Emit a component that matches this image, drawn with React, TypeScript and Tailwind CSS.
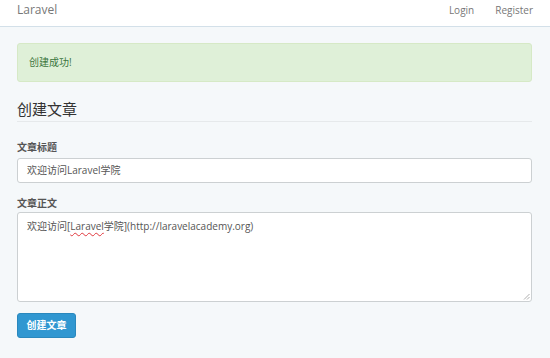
import React from "react";

export default function App() {
  const font = "font-['Open_Sans','Noto_Sans_CJK_SC',sans-serif]";
  return (
    <div className={`min-h-[358px] w-[550px] bg-[#f5f8fa] ${font} text-[#636b6f]`}>
      <nav className="h-[27px] border-b border-[#d3e0e9] bg-white">
        <div className="flex h-[20px] items-center pl-[17px] pr-[17px]">
          <span className="text-[12px] text-[#777]">Laravel</span>
          <div className="ml-auto flex items-center gap-[21px] text-[10px] text-[#777]">
            <span>Login</span>
            <span>Register</span>
          </div>
        </div>
      </nav>
      <main className="pl-[17px] pr-[18px] pt-[16px]">
        <div className="flex h-[39px] items-center rounded-[3px] border border-[#d6e9c6] bg-[#dff0d8] pl-[11px] text-[10px] text-[#3c763d]">
          创建成功!
        </div>
        <div className="mt-[17px] border-b border-[#e6e9eb] pb-[2px] text-[15px] leading-[20px] text-[#333]">
          创建文章
        </div>
        <div className="mt-[18px] mb-[4px] text-[10px] font-bold leading-[14px] text-[#555]">文章标题</div>
        <div className="flex h-[25px] items-center rounded-[3px] border border-[#ccd0d2] bg-white pl-[9px] text-[10px] text-[#555]">
          欢迎访问Laravel学院
        </div>
        <div className="mt-[13px] mb-[2px] text-[10px] font-bold leading-[14px] text-[#555]">文章正文</div>
        <div className="relative h-[90px] rounded-[3px] border border-[#ccd0d2] bg-white pl-[9px] pt-[6px] text-[10px] leading-[14px] text-[#555]">
          欢迎访问[<span className="underline decoration-wavy decoration-[#e0383e] decoration-1 underline-offset-2">Laravel</span>学院](http://laravelacademy.org)
          <svg className="absolute bottom-[1px] right-[1px]" width="7" height="7" viewBox="0 0 7 7">
            <line x1="6.5" y1="1" x2="1" y2="6.5" stroke="#999" strokeWidth="0.8" />
            <line x1="6.5" y1="4" x2="4" y2="6.5" stroke="#999" strokeWidth="0.8" />
          </svg>
        </div>
        <button className="mt-[11px] flex h-[25px] w-[59px] items-center justify-center rounded-[3px] border border-[#2a88bd] bg-[#3097d1] text-[10px] font-bold text-white">
          创建文章
        </button>
      </main>
    </div>
  );
}
